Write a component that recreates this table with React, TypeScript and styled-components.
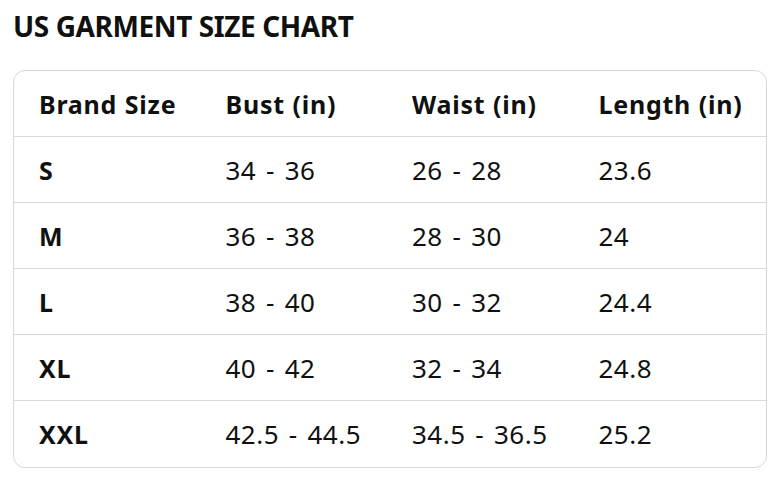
import React from "react";
import styled, { createGlobalStyle } from "styled-components";

const GlobalStyle = createGlobalStyle`
  body {
    margin: 0;
    background: #fff;
    font-family: "Noto Sans", "Open Sans", Arial, sans-serif;
    color: #0f1111;
  }
`;

const Page = styled.div`
  padding: 10px 17px 0 13px;
  width: 784px;
  box-sizing: border-box;
`;

const Heading = styled.h2`
  margin: 0;
  font-size: 28px;
  font-weight: 700;
  line-height: 32px;
  letter-spacing: -0.4px;
`;

const Table = styled.div`
  margin-top: 28px;
  border: 1.5px solid #d5d9d9;
  border-radius: 12px;
  overflow: hidden;
  width: 754px;
  box-sizing: border-box;
`;

const Row = styled.div<{ $last?: boolean }>`
  display: grid;
  grid-template-columns: repeat(4, 186.5px);
  height: 66px;
  align-items: center;
  border-bottom: ${(p) => (p.$last ? "none" : "1.5px solid #d5d9d9")};
  box-sizing: border-box;
`;

const Cell = styled.div<{ $bold?: boolean }>`
  padding-left: 25px;
  font-size: ${(p) => (p.$bold ? "25px" : "26px")};
  font-weight: ${(p) => (p.$bold ? 700 : 400)};
  letter-spacing: ${(p) => (p.$bold ? "0.75px" : "0.5px")};
  word-spacing: ${(p) => (p.$bold ? "0.5px" : "2.5px")};
  white-space: nowrap;
`;

const headers = ["Brand Size", "Bust (in)", "Waist (in)", "Length (in)"];

const rows = [
  ["S", "34 - 36", "26 - 28", "23.6"],
  ["M", "36 - 38", "28 - 30", "24"],
  ["L", "38 - 40", "30 - 32", "24.4"],
  ["XL", "40 - 42", "32 - 34", "24.8"],
  ["XXL", "42.5 - 44.5", "34.5 - 36.5", "25.2"],
];

const App: React.FC = () => {
  return (
    <Page>
      <GlobalStyle />
      <Heading>US GARMENT SIZE CHART</Heading>
      <Table>
        <Row>
          {headers.map((h) => (
            <Cell key={h} $bold>
              {h}
            </Cell>
          ))}
        </Row>
        {rows.map((r, i) => (
          <Row key={r[0]} $last={i === rows.length - 1}>
            {r.map((v, j) => (
              <Cell key={j} $bold={j === 0}>
                {v}
              </Cell>
            ))}
          </Row>
        ))}
      </Table>
    </Page>
  );
};

export default App;
